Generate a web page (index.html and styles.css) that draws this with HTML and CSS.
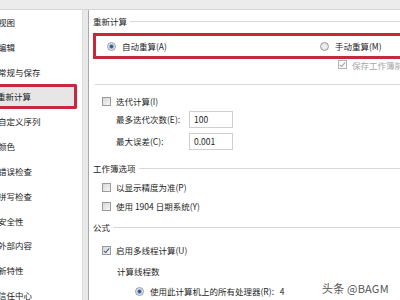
FILE: index.html
```html
<!DOCTYPE html>
<html lang="zh-CN">
<head>
    <meta charset="UTF-8">
    <title>Excel 选项 - 公式</title>
    <link rel="stylesheet" href="styles.css">
</head>
<body>
    <div class="topbar"></div>
    <div class="window">
        <ul class="nav">
            <li>视图</li>
            <li>编辑</li>
            <li>常规与保存</li>
            <li class="active">重新计算</li>
            <li>自定义序列</li>
            <li>颜色</li>
            <li>错误检查</li>
            <li>拼写检查</li>
            <li>安全性</li>
            <li>外部内容</li>
            <li>新特性</li>
            <li>信任中心</li>
        </ul>

        <div class="gap"></div>

        <div class="panel">
            <div class="group-title first">重新计算</div>
            <div class="mode-box">
                <label class="radio auto"><span class="dot on"></span>自动重算(A)</label>
                <label class="radio manual"><span class="dot"></span>手动重算(M)</label>
            </div>
            <div class="row save-row">
                <span class="box checked disabled"></span><span class="muted">保存工作簿前重新计算(W)</span>
            </div>
            <div class="sep"></div>

            <div class="row check-row iter"><span class="box"></span>迭代计算(I)</div>
            <div class="row field-row">
                <span class="field-label">最多迭代次数(E):</span>
                <span class="field">100</span>
            </div>
            <div class="row field-row">
                <span class="field-label">最大误差(C):</span>
                <span class="field">0.001</span>
            </div>

            <div class="group-title book">工作簿选项</div>
            <div class="row check-row opt1"><span class="box"></span>以显示精度为准(P)</div>
            <div class="row check-row opt2"><span class="box"></span>使用 1904 日期系统(Y)</div>

            <div class="group-title formula">公式</div>
            <div class="row check-row multi"><span class="box checked"></span>启用多线程计算(U)</div>
            <div class="row sub-title">计算线程数</div>
            <div class="row radio-row"><span class="dot on"></span>使用此计算机上的所有处理器(R):&nbsp;&nbsp;&nbsp;4</div>

            <div class="watermark">头条 @BAGM</div>
        </div>
    </div>
</body>
</html>
```

FILE: styles.css
```css
body {
    margin: 0;
    width: 400px;
    height: 300px;
    overflow: hidden;
    background: #f0f0f0;
    font-family: "Noto Sans CJK SC", "Noto Sans", sans-serif;
    font-size: 8.5px;
    color: #1e1e1e;
}

.topbar {
    height: 9px;
    background: #ececec;
    border-bottom: 1px solid #d6d6d6;
}

.window {
    display: flex;
    height: 290px;
}

/* left list */
.nav {
    list-style: none;
    margin: 0;
    padding: 0;
    width: 82px;
    background: #fff;
    border-right: 1px solid #dcdcdc;
    overflow: hidden;
}

.nav li {
    height: 24.8px;
    line-height: 24.8px;
    margin-left: -2px;
    white-space: nowrap;
    color: #222;
}

.nav li.active {
    width: 77px;
    height: 19px;
    line-height: 19px;
    margin-left: -3px;
    background: #e6e6e6;
    border: 3px solid #c8283c;
    border-left: none;
    border-radius: 0 2px 2px 0;
}

.gap {
    width: 5px;
    background: #e9e9e9;
    border-right: 1px solid #a9a9a9;
}

/* right panel */
.panel {
    position: relative;
    flex: 1;
    background: #fff;
    padding-left: 4px;
    overflow: hidden;
}

.group-title {
    display: flex;
    align-items: center;
    height: 12px;
    white-space: nowrap;
}

.group-title::after {
    content: "";
    flex: 1;
    height: 1px;
    margin-left: 3px;
    margin-top: 1px;
    background: #d8d8d8;
}

.group-title.first { margin-top: 5px; }
.group-title.book { margin-top: 12px; }
.group-title.formula { margin-top: 8px; }

.mode-box {
    display: flex;
    align-items: center;
    height: 20px;
    margin-top: 6px;
    margin-right: -4px;
    border: 3px solid #c8283c;
    border-right: none;
}

.radio {
    display: flex;
    align-items: center;
    white-space: nowrap;
}

.radio.auto { margin-left: 11px; }
.radio.manual { margin-left: 153px; }

.dot {
    flex-shrink: 0;
    width: 7px;
    height: 7px;
    margin-right: 6px;
    border: 1px solid #9c9c9c;
    border-radius: 50%;
    background: radial-gradient(circle, #f4f4f4, #dcdcdc);
    box-sizing: content-box;
}

.dot.on {
    background: radial-gradient(circle, #2a4f86 0, #3d6fae 1.6px, #cfd9e6 2.4px, #f2f2f2 4px);
}

.row {
    display: flex;
    align-items: center;
    white-space: nowrap;
}

.save-row {
    height: 11px;
    margin-left: 245px;
}

.muted { color: #a6a6a6; }

.box {
    flex-shrink: 0;
    width: 7px;
    height: 7px;
    margin-right: 5px;
    border: 1px solid #9a9a9a;
    background: linear-gradient(135deg, #d8d8d8, #f6f6f6);
    box-sizing: content-box;
    position: relative;
}

.box.checked::after {
    content: "";
    position: absolute;
    left: 2px;
    top: 0;
    width: 2px;
    height: 5px;
    border: solid #3b5d8c;
    border-width: 0 1.5px 1.5px 0;
    transform: rotate(40deg);
}

.box.disabled {
    border-color: #b4b4b4;
    background: #fafafa;
}

.box.disabled::after { border-color: #a8a8a8; }

.sep {
    height: 1px;
    margin-top: 14px;
    margin-left: 2px;
    background: #dadada;
}

.check-row {
    height: 14px;
    margin-left: 9px;
}

.iter { margin-top: 9px; }
.opt1 { margin-top: 6px; }
.opt2 { margin-top: 5px; }
.multi { margin-top: 10px; }

.field-row {
    height: 18px;
    margin-left: 23px;
    margin-top: 4px;
}

.iter + .field-row { margin-top: 2px; }

.field-label {
    flex-shrink: 0;
    width: 73px;
}

.field {
    flex-shrink: 0;
    width: 38px;
    height: 15px;
    line-height: 15px;
    padding-left: 4px;
    border: 1px solid #cfcfcf;
}

.sub-title {
    height: 12px;
    margin-top: 8px;
    margin-left: 24px;
}

.radio-row {
    height: 14px;
    margin-top: 7px;
    margin-left: 42px;
}

.watermark {
    position: absolute;
    left: 233px;
    top: 270px;
    font-size: 11px;
    color: #555;
    letter-spacing: 0.2px;
}
```
